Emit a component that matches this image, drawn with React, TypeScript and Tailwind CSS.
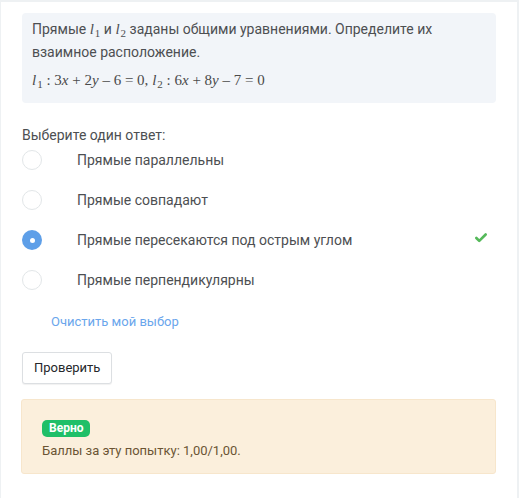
import { Check } from "lucide-react";

const options = [
  { text: "Прямые параллельны", checked: false, correct: false },
  { text: "Прямые совпадают", checked: false, correct: false },
  { text: "Прямые пересекаются под острым углом", checked: true, correct: true },
  { text: "Прямые перпендикулярны", checked: false, correct: false },
];

function L({ n }: { n: number }) {
  return (
    <span className="italic">
      l<span className="not-italic text-[11px] relative top-[3px] ml-[1px]">{n}</span>
    </span>
  );
}

export default function App() {
  return (
    <div className="min-h-screen bg-[#eef1f3] pt-[2px] pl-[1px] pr-[2px] font-['Roboto',sans-serif]">
      <div className="bg-white min-h-[496px] px-[21px] pt-[11px]">
        <div className="bg-[#f2f5f9] rounded-[4px] px-[10px] pt-[5px] pb-[11px] text-[14px] text-[#4d4f52] leading-[22px]">
          <p>
            Прямые <span className="font-['Liberation_Serif',serif] text-[15px]"><L n={1} /></span> и{" "}
            <span className="font-['Liberation_Serif',serif] text-[15px]"><L n={2} /></span> заданы общими уравнениями. Определите их
            взаимное расположение.
          </p>
          <p className="mt-[6px] font-['Liberation_Serif',serif] text-[15px] text-[#4a4a4a]">
            <L n={1} /> : 3<i>x</i> + 2<i>y</i> – 6 = 0, <L n={2} /> : 6<i>x</i> + 8<i>y</i> – 7 = 0
          </p>
        </div>

        <div className="mt-[22px] text-[14px] text-[#4d4f52] leading-[20px]">Выберите один ответ:</div>

        <div className="-mt-[5px] flex flex-col">
          {options.map((o) => (
            <div key={o.text} className="flex items-center h-[40px]">
              {o.checked ? (
                <span className="w-[20px] h-[20px] rounded-full bg-[#5e9fe8] flex items-center justify-center">
                  <span className="w-[5px] h-[5px] rounded-full bg-white" />
                </span>
              ) : (
                <span className="w-[20px] h-[20px] rounded-full border border-[#e2e6e8]" />
              )}
              <span className="ml-[35px] text-[14px] text-[#4d4f52]">{o.text}</span>
              {o.correct && (
                <Check className="ml-auto mr-[8px] -mt-[5px] text-[#55b95a]" size={14} strokeWidth={4.5} />
              )}
            </div>
          ))}
        </div>

        <div className="mt-[12px] pl-[29px] text-[13px] text-[#6aa6ec] leading-[20px]">Очистить мой выбор</div>

        <button className="mt-[20px] h-[32px] px-[11px] border border-[#dcdfe2] rounded-[3px] bg-white text-[13px] text-[#26282b] shadow-[0_1px_1px_rgba(0,0,0,0.06)]">
          Проверить
        </button>

        <div className="mt-[15px] -ml-[1px] bg-[#fbefdc] border border-[#f7e6cc] rounded-[3px] h-[75px] pl-[20px] pt-[15px]">
          <span className="inline-block bg-[#1fbf68] text-white font-bold text-[12px] leading-[17px] px-[7px] rounded-[5px]">
            Верно
          </span>
          <div className="mt-[2px] text-[13px] text-[#6b5534] leading-[20px]">Баллы за эту попытку: 1,00/1,00.</div>
        </div>
      </div>
    </div>
  );
}
